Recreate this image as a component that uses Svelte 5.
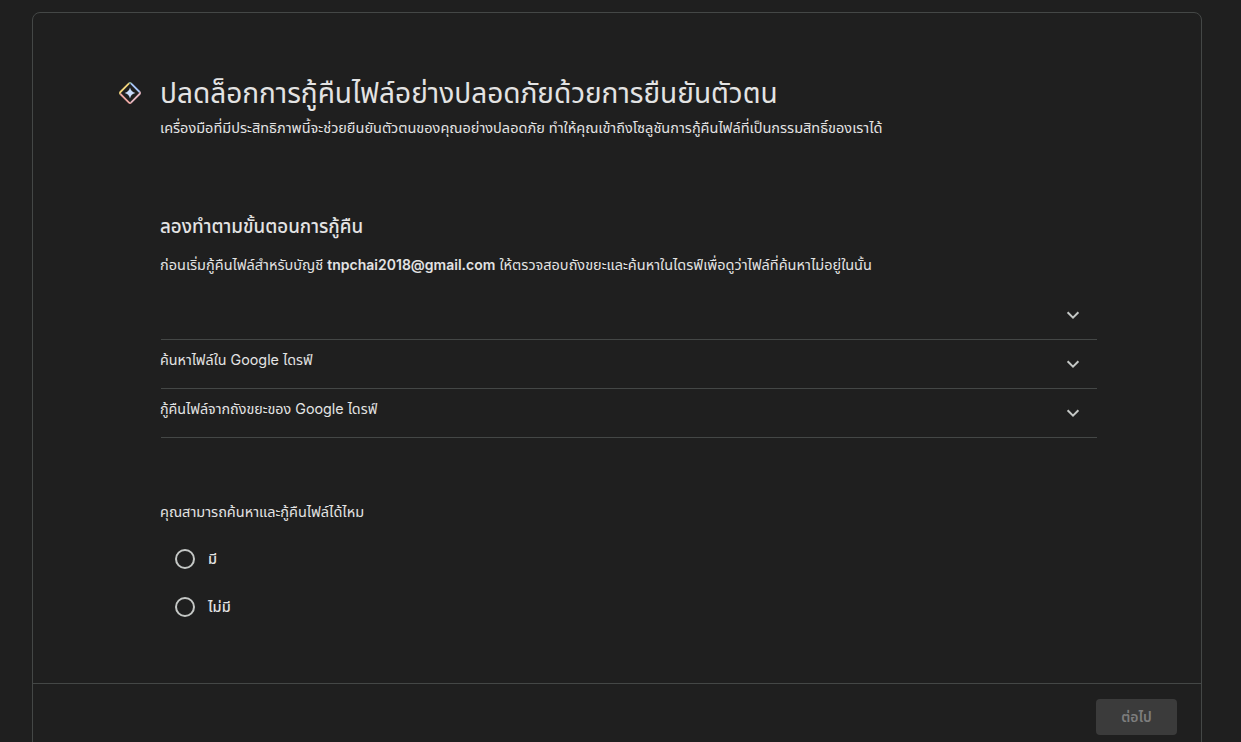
<script>
  const rows = ['', 'ค้นหาไฟล์ใน Google ไดรฟ์', 'กู้คืนไฟล์จากถังขยะของ Google ไดรฟ์'];
  const options = ['มี', 'ไม่มี'];
</script>

<div class="page">
  <main class="card">
    <div class="content">
      <header class="head">
        <svg class="spark" width="26" height="26" viewBox="0 0 26 26" fill="none" aria-hidden="true">
          <path d="M12 3.4a1.4 1.4 0 0 1 2 0" stroke="#8fb8a0" stroke-width="1.8" />
          <path d="M12 3.4 3.4 12a1.4 1.4 0 0 0 0 2" stroke="#f3d67c" stroke-width="1.8" />
          <path d="M3.4 14 12 22.6a1.4 1.4 0 0 0 2 0" stroke="#eea9a4" stroke-width="1.8" />
          <path d="M14 22.6 22.6 14a1.4 1.4 0 0 0 0-2" stroke="#e8b9c4" stroke-width="1.8" />
          <path d="M22.6 12 14 3.4" stroke="#a8c7fa" stroke-width="1.8" />
          <path d="M13 7.6c.6 2.9 2.5 4.8 5.4 5.4-2.9.6-4.8 2.5-5.4 5.4-.6-2.9-2.5-4.8-5.4-5.4 2.9-.6 4.8-2.5 5.4-5.4z" fill="#c9dcfb" />
        </svg>
        <div class="titles">
          <h1>ปลดล็อกการกู้คืนไฟล์อย่างปลอดภัยด้วยการยืนยันตัวตน</h1>
          <p class="sub">เครื่องมือที่มีประสิทธิภาพนี้จะช่วยยืนยันตัวตนของคุณอย่างปลอดภัย ทำให้คุณเข้าถึงโซลูชันการกู้คืนไฟล์ที่เป็นกรรมสิทธิ์ของเราได้</p>
        </div>
      </header>

      <section class="steps">
        <h2>ลองทำตามขั้นตอนการกู้คืน</h2>
        <p class="intro">ก่อนเริ่มกู้คืนไฟล์สำหรับบัญชี <b>tnpchai2018@gmail.com</b> ให้ตรวจสอบถังขยะและค้นหาในไดรฟ์เพื่อดูว่าไฟล์ที่ค้นหาไม่อยู่ในนั้น</p>
        <div class="rows">
          {#each rows as row}
            <div class="row">
              <span class="row-text">{row}</span>
              <svg width="24" height="24" viewBox="0 0 24 24" fill="none" aria-hidden="true">
                <path d="M6.6 9.3 12 14.7l5.4-5.4" stroke="#c4c7c5" stroke-width="2" />
              </svg>
            </div>
          {/each}
        </div>
      </section>

      <section class="question">
        <p>คุณสามารถค้นหาและกู้คืนไฟล์ได้ไหม</p>
        <div class="options">
          {#each options as option}
            <label class="option">
              <span class="radio"></span>
              <span class="label">{option}</span>
            </label>
          {/each}
        </div>
      </section>
    </div>
    <footer class="foot">
      <button disabled>ต่อไป</button>
    </footer>
  </main>
</div>

<style>
  :global(body) {
    margin: 0;
    background: #1f1f1f;
    font-family: Inter, "Noto Sans Thai", "Noto Sans", sans-serif;
  }
  .page {
    height: 742px;
    overflow: hidden;
    box-sizing: border-box;
    padding: 12px 39px 0 32px;
  }
  .card {
    border: 1px solid #444746;
    border-radius: 8px;
    height: 800px;
    box-sizing: border-box;
    color: #e3e3e3;
  }
  .content {
    height: 670px;
    box-sizing: border-box;
    padding: 62px 104px 0 84px;
  }
  .head {
    display: flex;
    gap: 17px;
    align-items: flex-start;
  }
  .spark {
    margin-top: 5px;
    flex: none;
  }
  h1 {
    margin: 0;
    font-size: 28px;
    font-weight: 400;
    line-height: 36px;
  }
  .sub {
    margin: 7px 0 0;
    font-size: 14.5px;
    line-height: 20px;
  }
  .steps {
    margin: 75px 0 0 43px;
  }
  h2 {
    margin: 0;
    font-size: 18.8px;
    font-weight: 500;
    line-height: 28px;
  }
  .intro {
    margin: 14px 0 0;
    font-size: 14.5px;
    line-height: 20px;
  }
  b {
    font-size: 14px;
    font-weight: 600;
  }
  .rows {
    margin: 16px 0 0 1px;
  }
  .row {
    height: 49px;
    box-sizing: border-box;
    display: flex;
    align-items: center;
    justify-content: space-between;
    padding: 0 12px 0 0;
    border-bottom: 1px solid #444746;
    font-size: 14.3px;
    line-height: 20px;
  }
  .row-text {
    margin: 0 0 8px -1px;
  }
  .row svg {
    margin-bottom: 1px;
  }
  .question {
    margin: 64px 0 0 43px;
    font-size: 14.5px;
    line-height: 20px;
  }
  .question p {
    margin: 0;
  }
  .options {
    margin-top: 13px;
  }
  .option {
    display: flex;
    align-items: center;
    gap: 13px;
    height: 48px;
    padding-left: 15px;
    font-weight: 500;
  }
  .radio {
    width: 20px;
    height: 20px;
    box-sizing: border-box;
    border: 2px solid #c4c7c5;
    border-radius: 50%;
  }
  .foot {
    border-top: 1px solid #444746;
    display: flex;
    justify-content: flex-end;
    padding: 15px 24px;
  }
  button {
    width: 81px;
    height: 36px;
    border: none;
    border-radius: 4px;
    background: #3b3b3b;
    color: #7d7d7d;
    font: 600 14px Inter, "Noto Sans Thai", sans-serif;
  }
</style>
